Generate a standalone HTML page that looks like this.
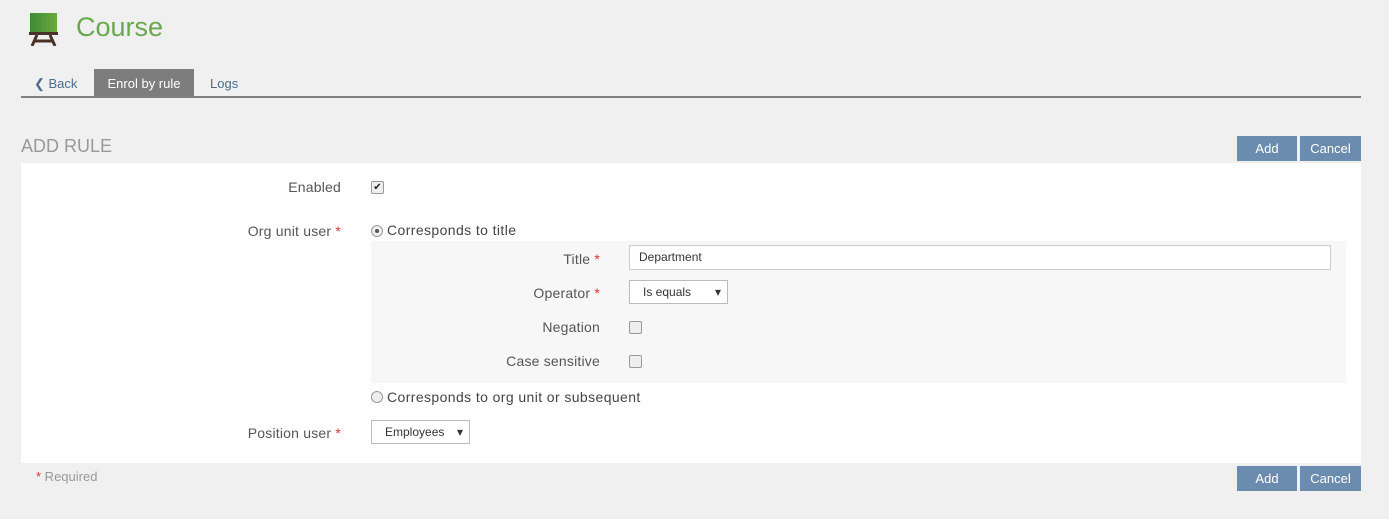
<!DOCTYPE html>
<html><head><style>
body{margin:0;width:1389px;height:519px;background:#f0f0f0;font-family:"Liberation Sans",sans-serif;position:relative;overflow:hidden;color:#555}
.a{position:absolute}
.btn{position:absolute;background:#6b8cae;color:#fff;font-size:13px;text-align:center;line-height:25px;height:25px}
.lbl{position:absolute;font-size:14px;color:#555;text-align:right;letter-spacing:0.2px}
.req{color:#d33}
.cb{position:absolute;width:11px;height:11px;border:1px solid #999;border-radius:2px;background:#eee}
.rd{position:absolute;width:10px;height:10px;border:1px solid #999;border-radius:50%;background:#eee}
.sel{position:absolute;border:1px solid #bbb;background:#fff;font-size:12px;color:#333;height:23px;line-height:23px;box-sizing:border-box;padding-left:13px}
.sel:after{content:"▾";position:absolute;right:6px;top:0;font-size:12px}
.t{font-size:14px;color:#444;letter-spacing:0.4px}
</style></head><body>
<svg class="a" style="left:28px;top:12px" width="30" height="34" viewBox="0 0 30 34">
<defs><linearGradient id="g" x1="0" x2="1"><stop offset="0" stop-color="#3f8a35"/><stop offset="1" stop-color="#6aab3e"/></linearGradient></defs>
<rect x="2" y="1" width="27" height="19" fill="url(#g)"/><rect x="1" y="20" width="29" height="3" fill="#4a3226"/>
<path d="M9 23 L4 34 M22 23 L27 34 M6 29 H25" stroke="#4a3226" stroke-width="3" fill="none"/></svg>
<div class="a" style="left:76px;top:12px;font-size:27px;color:#6aa84f">Course</div>
<div class="a" style="left:34px;top:76px;font-size:13px;color:#4a6c8c">&#10094; Back</div>
<div class="a" style="left:94px;top:69px;width:100px;height:27px;background:#7d7d7d;color:#fff;font-size:13px;text-align:center;line-height:30px">Enrol by rule</div>
<div class="a" style="left:210px;top:76px;font-size:13px;color:#4a6c8c">Logs</div>
<div class="a" style="left:21px;top:96px;width:1340px;height:2px;background:#808080"></div>
<div class="a" style="left:21px;top:136px;font-size:18px;color:#999">ADD RULE</div>
<div class="btn" style="left:1237px;top:136px;width:60px">Add</div>
<div class="btn" style="left:1300px;top:136px;width:61px">Cancel</div>
<div class="a" style="left:21px;top:163px;width:1340px;height:300px;background:#fff"></div>
<div class="lbl" style="left:200px;width:141px;top:179px">Enabled</div>
<div class="cb" style="left:371px;top:181px;font-size:10px;line-height:11px;text-align:center;color:#222">✔</div>
<div class="lbl" style="left:200px;width:141px;top:223px">Org unit user <span class="req">*</span></div>
<div class="rd" style="left:371px;top:225px"><div class="a" style="left:3px;top:3px;width:4px;height:4px;border-radius:50%;background:#555"></div></div>
<div class="a t" style="left:387px;top:222px">Corresponds to title</div>
<div class="a" style="left:371px;top:241px;width:975px;height:142px;background:#f7f7f7"></div>
<div class="lbl" style="left:400px;width:200px;top:251px">Title <span class="req">*</span></div>
<div class="a" style="left:629px;top:245px;width:702px;height:25px;border:1px solid #ccc;background:#fff;box-sizing:border-box;font-size:12px;line-height:23px;padding-left:9px;color:#333">Department</div>
<div class="lbl" style="left:400px;width:200px;top:285px">Operator <span class="req">*</span></div>
<div class="sel" style="left:629px;top:280px;width:99px;height:24px">Is equals</div>
<div class="lbl" style="left:400px;width:200px;top:319px">Negation</div>
<div class="cb" style="left:629px;top:321px"></div>
<div class="lbl" style="left:400px;width:200px;top:353px">Case sensitive</div>
<div class="cb" style="left:629px;top:355px"></div>
<div class="rd" style="left:371px;top:391px"></div>
<div class="a t" style="left:387px;top:389px">Corresponds to org unit or subsequent</div>
<div class="lbl" style="left:200px;width:141px;top:425px">Position user <span class="req">*</span></div>
<div class="sel" style="left:371px;top:420px;width:99px;height:24px">Employees</div>
<div class="a" style="left:36px;top:469px;font-size:13px;color:#999"><span class="req">*</span> Required</div>
<div class="btn" style="left:1237px;top:466px;width:60px">Add</div>
<div class="btn" style="left:1300px;top:466px;width:61px">Cancel</div>
</body></html>
